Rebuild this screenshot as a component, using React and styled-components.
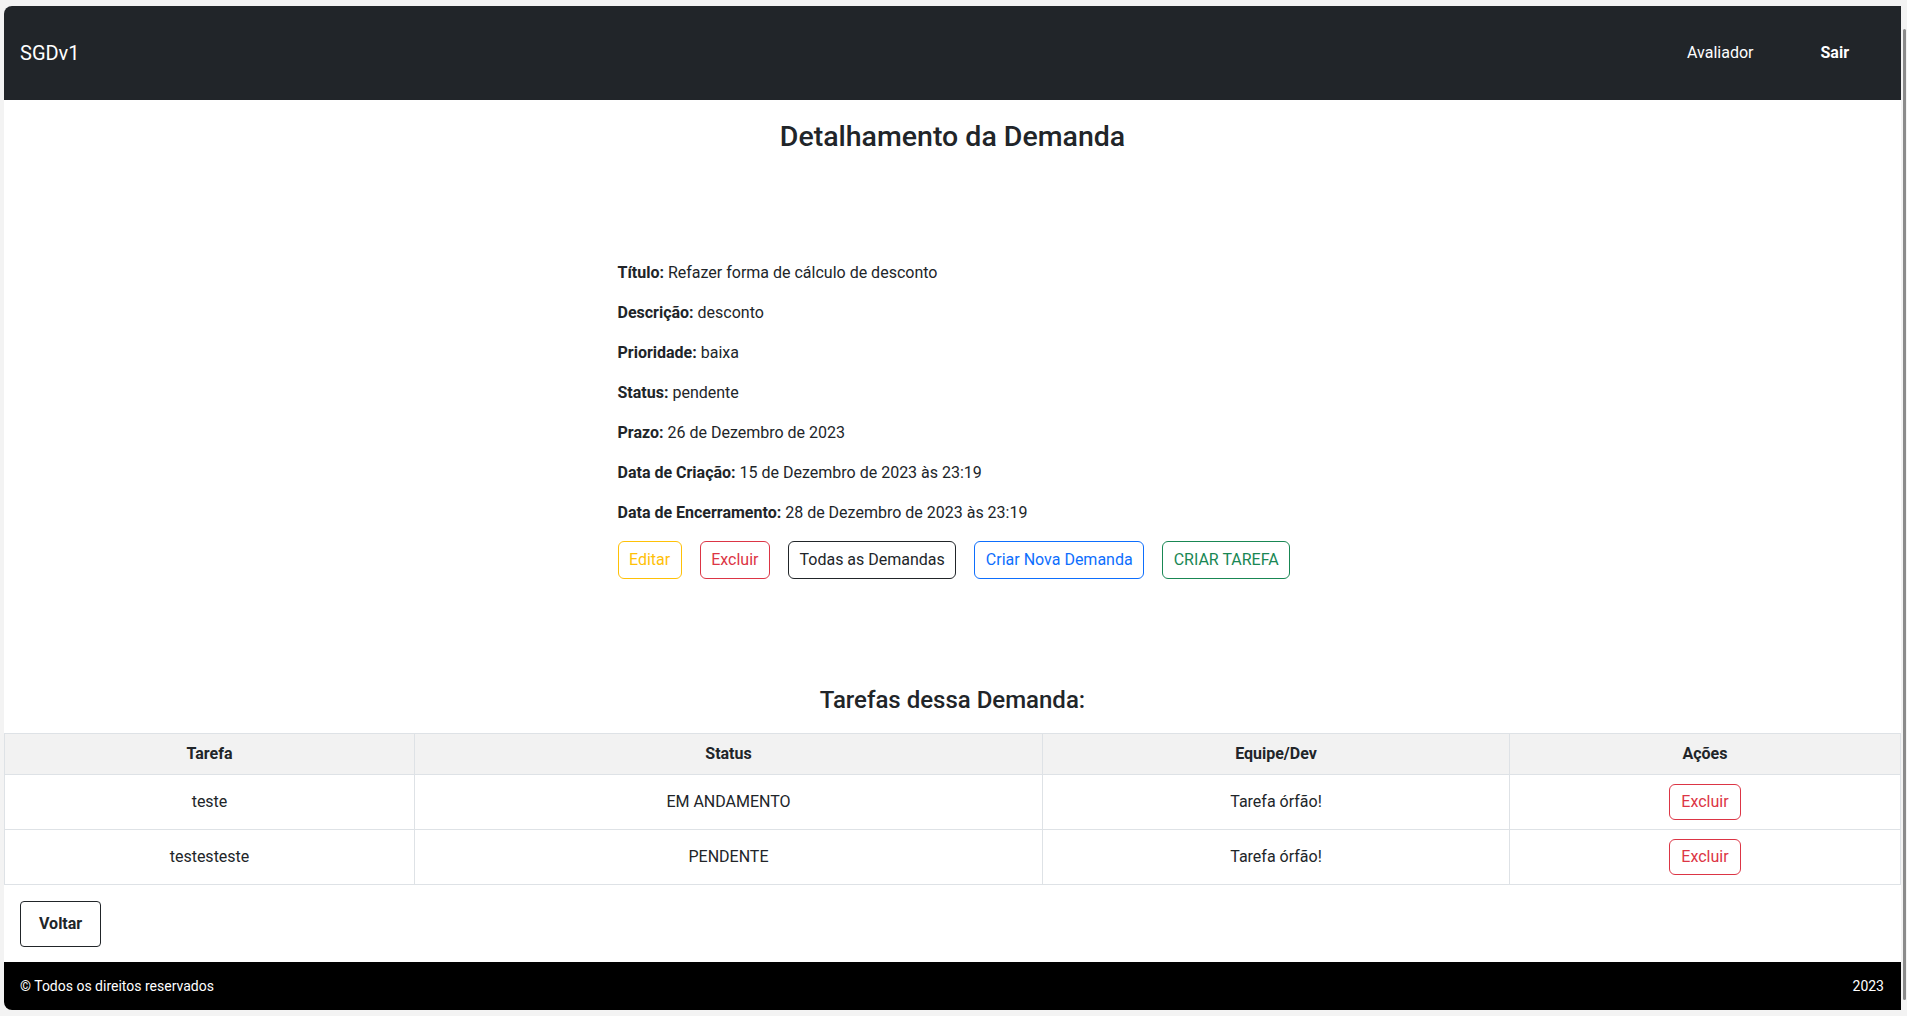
import React from 'react';
import styled, { createGlobalStyle, css } from 'styled-components';

const GlobalStyle = createGlobalStyle`
  html, body {
    margin: 0;
    padding: 0;
    background: #f3f3f3;
  }
  * { box-sizing: border-box; }
  body {
    font-family: Roboto, "Liberation Sans", sans-serif;
    color: #212529;
    font-size: 16px;
    line-height: 1.5;
  }
`;

const Frame = styled.div`
  height: 1016px;
  display: flex;
  padding: 6px 0 6px 4px;
  background: #f3f3f3;
`;

const Page = styled.div`
  flex: 1;
  display: flex;
  flex-direction: column;
  background: #fff;
  border-radius: 8px 0 0 8px;
  overflow: hidden;
`;

const ScrollTrack = styled.div`
  width: 6px;
  display: flex;
  flex-direction: column;
  padding: 23px 0 10px 2px;
`;

const Thumb = styled.div`
  flex: 1;
  width: 3px;
  background: #8b8b8b;
  border-radius: 2px;
`;

const Navbar = styled.nav`
  height: 94px;
  flex-shrink: 0;
  background: #212529;
  display: flex;
  align-items: center;
  padding: 0 52px 0 16px;
`;

const Brand = styled.span`
  font-size: 20px;
  color: #fff;
  flex: 1;
`;

const NavLink = styled.span`
  font-size: 16px;
  color: #fff;
  margin-left: ${({ gap }) => gap || 0}px;
  font-weight: ${({ bold }) => (bold ? 700 : 400)};
`;

const Main = styled.main`
  flex: 1;
  min-height: 0;
  display: flex;
  flex-direction: column;
`;

const Title = styled.h3`
  margin: 20px 0 0;
  text-align: center;
  font-size: 28.5px;
  font-weight: 500;
  line-height: 1.2;
`;

const Details = styled.section`
  width: 670px;
  margin: 107px auto 0;
`;

const Field = styled.p`
  margin: 0 0 16px;
  font-size: 16px;
  line-height: 24px;

  b { font-weight: 700; }
`;

const Actions = styled.div`
  display: flex;
  gap: 18px;
`;

const tones = {
  warning: '#ffc107',
  danger: '#dc3545',
  dark: '#212529',
  primary: '#0d6efd',
  success: '#198754',
};

const OutlineButton = styled.button`
  flex-shrink: 0;
  white-space: nowrap;
  font-family: inherit;
  font-size: 16px;
  line-height: 24px;
  padding: 6px 10.5px;
  background: #fff;
  border: 1px solid ${({ tone }) => tones[tone]};
  color: ${({ tone }) => tones[tone]};
  border-radius: 6px;
  cursor: pointer;
  ${({ small }) => small && css`
    padding: 5px 11px;
  `}
`;

const SubTitle = styled.h4`
  margin: 107px 0 18px;
  text-align: center;
  font-size: 24px;
  font-weight: 500;
  line-height: 1.2;
`;

const Table = styled.table`
  width: 100%;
  border-collapse: collapse;
  table-layout: fixed;
`;

const Th = styled.th`
  background: #f2f2f2;
  border: 1px solid #dee2e6;
  padding: 8px;
  font-weight: 700;
  font-size: 16px;
  line-height: 24px;
  text-align: center;
  width: ${({ w }) => w}px;
`;

const Td = styled.td`
  border: 1px solid #dee2e6;
  padding: 8px;
  font-size: 16px;
  line-height: 24px;
  height: 55px;
  text-align: center;
  vertical-align: middle;
`;

const BackRow = styled.div`
  padding: 16px 16px 0;
`;

const BackButton = styled.button`
  font-family: inherit;
  font-size: 16px;
  font-weight: 700;
  line-height: 24px;
  padding: 10px 18px;
  background: #fff;
  border: 1px solid #212529;
  color: #212529;
  border-radius: 4px;
  cursor: pointer;
`;

const Footer = styled.footer`
  height: 48px;
  flex-shrink: 0;
  background: #000;
  color: #fff;
  display: flex;
  align-items: center;
  justify-content: space-between;
  padding: 0 17px 0 16px;
  font-size: 14px;
`;

const fields = [
  ['Título:', 'Refazer forma de cálculo de desconto'],
  ['Descrição:', 'desconto'],
  ['Prioridade:', 'baixa'],
  ['Status:', 'pendente'],
  ['Prazo:', '26 de Dezembro de 2023'],
  ['Data de Criação:', '15 de Dezembro de 2023 às 23:19'],
  ['Data de Encerramento:', '28 de Dezembro de 2023 às 23:19'],
];

const tasks = [
  { name: 'teste', status: 'EM ANDAMENTO', team: 'Tarefa órfão!' },
  { name: 'testesteste', status: 'PENDENTE', team: 'Tarefa órfão!' },
];

function App() {
  return (
    <>
      <GlobalStyle />
      <Frame>
        <Page>
          <Navbar>
            <Brand>SGDv1</Brand>
            <NavLink>Avaliador</NavLink>
            <NavLink bold gap={67}>Sair</NavLink>
          </Navbar>
          <Main>
            <Title>Detalhamento da Demanda</Title>
            <Details>
              {fields.map(([label, value]) => (
                <Field key={label}>
                  <b>{label}</b> {value}
                </Field>
              ))}
              <Actions>
                <OutlineButton tone="warning">Editar</OutlineButton>
                <OutlineButton tone="danger">Excluir</OutlineButton>
                <OutlineButton tone="dark">Todas as Demandas</OutlineButton>
                <OutlineButton tone="primary">Criar Nova Demanda</OutlineButton>
                <OutlineButton tone="success">CRIAR TAREFA</OutlineButton>
              </Actions>
            </Details>
            <SubTitle>Tarefas dessa Demanda:</SubTitle>
            <Table>
              <thead>
                <tr>
                  <Th w={410}>Tarefa</Th>
                  <Th w={628}>Status</Th>
                  <Th w={467}>Equipe/Dev</Th>
                  <Th w={391}>Ações</Th>
                </tr>
              </thead>
              <tbody>
                {tasks.map((t) => (
                  <tr key={t.name}>
                    <Td>{t.name}</Td>
                    <Td>{t.status}</Td>
                    <Td>{t.team}</Td>
                    <Td>
                      <OutlineButton tone="danger" small>Excluir</OutlineButton>
                    </Td>
                  </tr>
                ))}
              </tbody>
            </Table>
            <BackRow>
              <BackButton>Voltar</BackButton>
            </BackRow>
          </Main>
          <Footer>
            <span>© Todos os direitos reservados</span>
            <span>2023</span>
          </Footer>
        </Page>
        <ScrollTrack>
          <Thumb />
        </ScrollTrack>
      </Frame>
    </>
  );
}

export default App;
